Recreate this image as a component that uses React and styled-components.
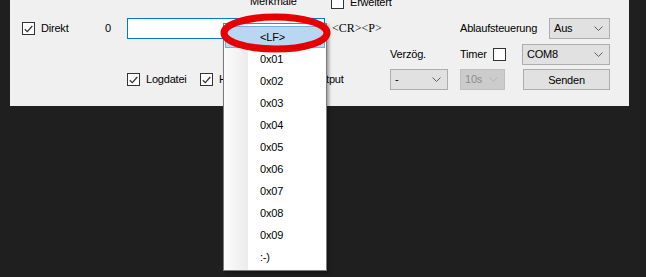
import React from 'react';
import styled, { createGlobalStyle } from 'styled-components';

const GlobalStyle = createGlobalStyle`
  html, body {
    margin: 0;
    padding: 0;
    background: #1f1f1f;
  }
  body {
    font-family: "Liberation Sans", Arial, sans-serif;
    font-size: 11px;
    letter-spacing: -0.2px;
    color: #000;
  }
`;

const Page = styled.div`
  position: relative;
  width: 646px;
  height: 277px;
  overflow: hidden;
  background: #1f1f1f;
`;

const Panel = styled.div`
  display: flex;
  flex-direction: column;
  margin-left: 10px;
  width: 619px;
  height: 106px;
  background: #f0f0f0;
`;

const Row = styled.div`
  display: flex;
  align-items: center;
  height: ${p => p.$h}px;
  margin-top: ${p => p.$mt}px;
  padding-left: ${p => p.$pl}px;
`;

const Cell = styled.div`
  display: flex;
  align-items: center;
  flex: none;
  width: ${p => (p.$w ? `${p.$w}px` : 'auto')};
  margin-left: ${p => p.$ml || 0}px;
  height: 100%;
`;

const Text = styled.span`
  white-space: nowrap;
  line-height: 1;
`;

const Caption = styled(Text)`
  margin-top: -3px;
`;

const SerifText = styled.span`
  font-family: "Liberation Serif", "Times New Roman", serif;
  font-size: 12px;
  letter-spacing: 0;
  white-space: nowrap;
`;

const Box = styled.span`
  display: inline-flex;
  align-items: center;
  justify-content: center;
  flex: none;
  width: 13px;
  height: 13px;
  box-sizing: border-box;
  border: 1px solid #333;
  background: #fff;
`;

const CheckLabel = styled.label`
  display: flex;
  align-items: center;
  gap: 6px;
  white-space: nowrap;
`;

const TextBox = styled.div`
  width: 198px;
  height: 21px;
  box-sizing: border-box;
  border: 1px solid #0078d7;
  background: #fff;
`;

const Combo = styled.div`
  display: flex;
  align-items: center;
  justify-content: space-between;
  width: 100%;
  height: 21px;
  box-sizing: border-box;
  padding: 0 6px 0 4px;
  border: 1px solid ${p => (p.$disabled ? '#bfbfbf' : '#adadad')};
  background: ${p => (p.$disabled ? '#cccccc' : '#e1e1e1')};
  color: ${p => (p.$disabled ? '#8d8d8d' : '#000')};
`;

const Button = styled.div`
  display: flex;
  align-items: center;
  justify-content: center;
  width: 100%;
  height: 21px;
  box-sizing: border-box;
  border: 1px solid #adadad;
  background: #e1e1e1;
`;

const DropList = styled.div`
  position: absolute;
  left: 223px;
  top: 23px;
  width: 104px;
  box-sizing: border-box;
  padding: 2px 1px;
  border: 1px solid #7a7a7a;
  background: linear-gradient(to right, #fbfbfb 0, #ececec 24px, #fff 24px);
  box-shadow: 2px 2px 3px rgba(0, 0, 0, 0.35);
`;

const Item = styled.div`
  display: flex;
  align-items: center;
  height: 22px;
  box-sizing: border-box;
  padding-left: 34px;
  border: 1px solid ${p => (p.$active ? '#7aaee0' : 'transparent')};
  background: ${p => (p.$active ? '#b9d7f2' : 'transparent')};
`;

const Marker = styled.svg`
  position: absolute;
  left: 215px;
  top: 8px;
  pointer-events: none;
`;

const Check = ({ checked }) => (
  <Box>
    {checked && (
      <svg width="9" height="8" viewBox="0 0 9 8">
        <path d="M0.8 4.2 L3.3 6.6 L8.3 1" fill="none" stroke="#333" strokeWidth="1.3" />
      </svg>
    )}
  </Box>
);

const Chevron = ({ color = '#606060' }) => (
  <svg width="9" height="5" viewBox="0 0 9 5">
    <path d="M0.5 0.5 L4.5 4.5 L8.5 0.5" fill="none" stroke={color} strokeWidth="1" />
  </svg>
);

const Select = ({ value, disabled }) => (
  <Combo $disabled={disabled}>
    <Text>{value}</Text>
    <Chevron color={disabled ? '#b5b5b5' : '#606060'} />
  </Combo>
);

const items = ['<LF>', '0x01', '0x02', '0x03', '0x04', '0x05', '0x06', '0x07', '0x08', '0x09', ':-)'];

export default function App() {
  return (
    <Page>
      <GlobalStyle />
      <Panel>
        <Row $h={13} $mt={-4} $pl={240}>
          <Cell $w={81}><Caption>Merkmale</Caption></Cell>
          <Cell>
            <CheckLabel><Check /><Text>Erweitert</Text></CheckLabel>
          </Cell>
        </Row>
        <Row $h={21} $mt={9} $pl={12}>
          <Cell $w={83}>
            <CheckLabel><Check checked /><Text>Direkt</Text></CheckLabel>
          </Cell>
          <Cell $w={22}><Text>0</Text></Cell>
          <Cell $w={198}><TextBox /></Cell>
          <Cell $w={128} $ml={7}><SerifText>&lt;CR&gt;&lt;P&gt;</SerifText></Cell>
          <Cell $w={89}><Text>Ablaufsteuerung</Text></Cell>
          <Cell $w={61}><Select value="Aus" /></Cell>
        </Row>
        <Row $h={20} $mt={5} $pl={380}>
          <Cell $w={70}><Text>Verzög.</Text></Cell>
          <Cell $w={33}><Text>Timer</Text></Cell>
          <Cell $w={29}><Check /></Cell>
          <Cell $w={88}><Select value="COM8" /></Cell>
        </Row>
        <Row $h={21} $mt={5} $pl={117}>
          <Cell $w={73}>
            <CheckLabel><Check checked /><Text>Logdatei</Text></CheckLabel>
          </Cell>
          <Cell $w={190}>
            <CheckLabel><Check checked /><Text>Hex-Darstellung im Output</Text></CheckLabel>
          </Cell>
          <Cell $w={58}><Select value="-" /></Cell>
          <Cell $w={45} $ml={12}><Select value="10s" disabled /></Cell>
          <Cell $w={87} $ml={18}><Button>Senden</Button></Cell>
        </Row>
      </Panel>

      <DropList>
        {items.map((it, i) => (
          <Item key={it} $active={i === 0}><Text>{it}</Text></Item>
        ))}
      </DropList>

      <Marker width="122" height="52" viewBox="0 0 122 52">
        <ellipse cx="60.5" cy="25" rx="51.5" ry="16" fill="none" stroke="#e60000" strokeWidth="7" />
      </Marker>
    </Page>
  );
}
